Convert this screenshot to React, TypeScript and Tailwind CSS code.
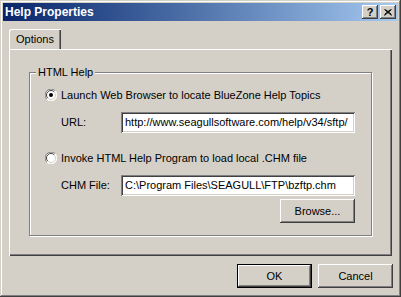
import React from "react";

const raised =
  "shadow-[inset_-1px_-1px_0_#404040,inset_1px_1px_0_#ffffff,inset_-2px_-2px_0_#808080,inset_2px_2px_0_#d4d0c8]";
const sunken =
  "shadow-[inset_1px_1px_0_#808080,inset_-1px_-1px_0_#ffffff,inset_2px_2px_0_#404040,inset_-2px_-2px_0_#d4d0c8]";

const Radio = ({ checked }: { checked?: boolean }) => (
  <svg width="12" height="12" viewBox="0 0 12 12" className="shrink-0">
    <circle cx="6" cy="6" r="5.5" fill="#fff" />
    <path d="M10.2 1.8 A5.5 5.5 0 0 0 1.8 10.2" stroke="#808080" strokeWidth="1" fill="none" />
    <path d="M9.2 2.8 A4.5 4.5 0 0 0 2.8 9.2" stroke="#404040" strokeWidth="1" fill="none" />
    <path d="M1.8 10.2 A5.5 5.5 0 0 0 10.2 1.8" stroke="#ffffff" strokeWidth="1" fill="none" />
    <path d="M2.8 9.2 A4.5 4.5 0 0 0 9.2 2.8" stroke="#d4d0c8" strokeWidth="1" fill="none" />
    {checked && <circle cx="6" cy="6" r="2" fill="#000" />}
  </svg>
);

const Field = ({ label, value }: { label: string; value: string }) => (
  <div className="flex items-center pl-[16px]">
    <span className="w-[60px]">{label}</span>
    <div className={`w-[234px] h-[21px] bg-white flex items-center px-[4px] overflow-hidden whitespace-nowrap ${sunken}`}>
      {value}
    </div>
  </div>
);

const Button = ({ children, def }: { children: React.ReactNode; def?: boolean }) => (
  <div
    className={`w-[75px] h-[24px] flex items-center justify-center ${
      def
        ? "border border-black shadow-[inset_-1px_-1px_0_#404040,inset_1px_1px_0_#ffffff,inset_-2px_-2px_0_#808080]"
        : raised
    }`}
  >
    {children}
  </div>
);

export default function App() {
  return (
    <div
      className="w-[401px] h-[297px] bg-[#d4d0c8] p-[3px] flex flex-col text-[11px] text-black shadow-[inset_-1px_-1px_0_#404040,inset_1px_1px_0_#d4d0c8,inset_-2px_-2px_0_#808080,inset_2px_2px_0_#ffffff]"
      style={{ fontFamily: '"Liberation Sans", Arial, sans-serif' }}
    >
      {/* title bar */}
      <div className="h-[18px] bg-gradient-to-r from-[#0a246a] to-[#a6caf0] flex items-center justify-between pl-[2px] pr-[2px]">
        <span className="text-white font-bold text-[12px] leading-none">Help Properties</span>
        <div className="flex gap-[2px]">
          <div className={`w-[16px] h-[14px] bg-[#d4d0c8] flex items-center justify-center font-bold text-[11px] leading-none ${raised}`}>
            ?
          </div>
          <div className={`w-[16px] h-[14px] bg-[#d4d0c8] flex items-center justify-center ${raised}`}>
            <svg width="8" height="7" viewBox="0 0 8 7">
              <path d="M0.5 0.5 L7.5 6.5 M1.5 0.5 L7.5 5.5 M7.5 0.5 L0.5 6.5 M6.5 0.5 L0.5 5.5" stroke="#000" strokeWidth="1" />
            </svg>
          </div>
        </div>
      </div>

      {/* tabs */}
      <div className="mt-[8px] px-[6px] flex flex-col">
        <div className="flex">
          <div className="w-[52px] h-[20px] flex items-center justify-center rounded-tl-[2px] shadow-[inset_1px_1px_0_#ffffff,inset_-1px_0_0_#404040,inset_-2px_0_0_#808080]">
            Options
          </div>
        </div>
        <div className="h-[207px] px-[20px] pt-[23px] shadow-[inset_1px_1px_0_#ffffff,inset_-1px_-1px_0_#404040,inset_-2px_-2px_0_#808080]">
          {/* group box */}
          <div className="relative h-[164px] border border-[#808080] shadow-[1px_1px_0_#ffffff,inset_1px_1px_0_#ffffff] flex flex-col pl-[15px] pt-[15px]">
            <span className="absolute left-[6px] top-[-8px] bg-[#d4d0c8] px-[2px] leading-[14px]">HTML Help</span>
            <div className="flex items-center gap-[4px] h-[14px]">
              <Radio checked />
              <span>Launch Web Browser to locate BlueZone Help Topics</span>
            </div>
            <div className="mt-[10px]">
              <Field label="URL:" value="http://www.seagullsoftware.com/help/v34/sftp/" />
            </div>
            <div className="mt-[18px] flex items-center gap-[4px] h-[14px]">
              <Radio />
              <span>Invoke HTML Help Program to load local .CHM file</span>
            </div>
            <div className="mt-[10px]">
              <Field label="CHM File:" value="C:\Program Files\SEAGULL\FTP\bzftp.chm" />
            </div>
            <div className="mt-[3px] flex pl-[235px]">
              <Button>Browse...</Button>
            </div>
          </div>
        </div>
      </div>

      {/* buttons */}
      <div className="mt-[8px] flex justify-end gap-[6px] pr-[5px]">
        <Button def>OK</Button>
        <Button>Cancel</Button>
      </div>
    </div>
  );
}
